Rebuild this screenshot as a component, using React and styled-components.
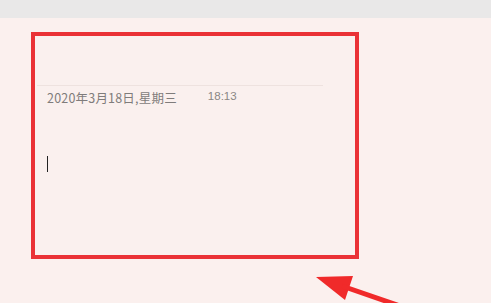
import styled, { createGlobalStyle } from "styled-components";

const Global = createGlobalStyle`
  html, body {
    margin: 0;
    padding: 0;
    background: #fbf0ee;
    font-family: "Noto Sans CJK SC", "Liberation Sans", sans-serif;
  }
`;

const Page = styled.div`
  position: relative;
  width: 491px;
  height: 303px;
  overflow: hidden;
  background: #fbf0ee;
`;

const TopBar = styled.div`
  height: 18px;
  background: #e9e8e8;
`;

const Main = styled.div`
  padding: 14px 0 0 31px;
`;

const Card = styled.div`
  box-sizing: border-box;
  width: 328px;
  height: 227px;
  border: 4px solid #ea3236;
  background: #faf0ee;
  padding-top: 49px;
`;

const Divider = styled.div`
  margin-left: 2px;
  width: 286px;
  height: 1px;
  background: #eee2df;
`;

const DateRow = styled.div`
  display: flex;
  align-items: flex-start;
  padding-left: 12px;
  color: #7f7c7b;
`;

const DateText = styled.span`
  font-size: 12.5px;
  line-height: 14px;
  margin-top: 5px;
  letter-spacing: 0.2px;
`;

const TimeText = styled.span`
  font-family: "Liberation Sans", sans-serif;
  font-size: 11.5px;
  line-height: 12px;
  margin-top: 4px;
  margin-left: 31px;
  color: #8a8685;
`;

const Caret = styled.div`
  width: 1px;
  height: 16px;
  margin: 51px 0 0 12px;
  background: #222;
`;

const Arrow = styled.svg`
  position: absolute;
  left: 300px;
  top: 260px;
`;

export default function App() {
  return (
    <Page>
      <Global />
      <TopBar />
      <Main>
        <Card>
          <Divider />
          <DateRow>
            <DateText>2020年3月18日,星期三</DateText>
            <TimeText>18:13</TimeText>
          </DateRow>
          <Caret />
        </Card>
      </Main>
      <Arrow width="191" height="43" viewBox="0 0 191 43">
        <polygon points="16,17 53,16 45,40" fill="#f02a2a" />
        <line x1="42" y1="26" x2="100" y2="46" stroke="#f02a2a" strokeWidth="5" />
      </Arrow>
    </Page>
  );
}
